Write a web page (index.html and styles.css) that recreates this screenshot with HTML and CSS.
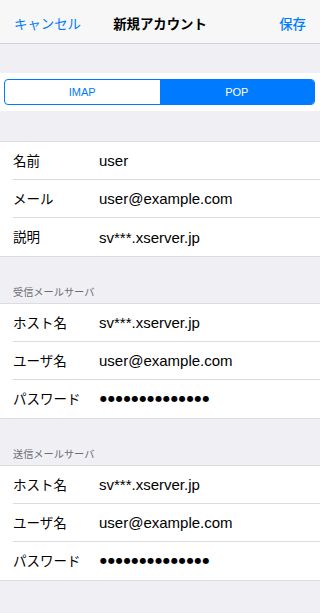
FILE: index.html
```html
<!DOCTYPE html>
<html lang="ja">
<head>
<meta charset="utf-8">
<link rel="stylesheet" href="styles.css">
</head>
<body>
<div class="screen">
  <header class="nav">
    <span class="nav-btn">キャンセル</span>
    <span class="nav-title">新規アカウント</span>
    <span class="nav-btn nav-save">保存</span>
  </header>
  <div class="spacer-top"></div>
  <div class="seg-band">
    <div class="seg">
      <div class="seg-item">IMAP</div>
      <div class="seg-item active">POP</div>
    </div>
  </div>
  <div class="spacer-mid"></div>
  <div class="group">
    <div class="row"><span class="label">名前</span><span class="value">user</span></div>
    <div class="row"><span class="label">メール</span><span class="value">user@example.com</span></div>
    <div class="row"><span class="label">説明</span><span class="value">sv***.xserver.jp</span></div>
  </div>
  <div class="section-header">受信メールサーバ</div>
  <div class="group">
    <div class="row"><span class="label">ホスト名</span><span class="value">sv***.xserver.jp</span></div>
    <div class="row"><span class="label">ユーザ名</span><span class="value">user@example.com</span></div>
    <div class="row"><span class="label">パスワード</span><span class="value dots">●●●●●●●●●●●●●●</span></div>
  </div>
  <div class="section-header">送信メールサーバ</div>
  <div class="group">
    <div class="row"><span class="label">ホスト名</span><span class="value">sv***.xserver.jp</span></div>
    <div class="row"><span class="label">ユーザ名</span><span class="value">user@example.com</span></div>
    <div class="row"><span class="label">パスワード</span><span class="value dots">●●●●●●●●●●●●●●</span></div>
  </div>
</div>
</body>
</html>
```
FILE: styles.css
```css
* { box-sizing: border-box; }
html, body { margin: 0; padding: 0; }
body {
  background: #efeff4;
  font-family: "Liberation Sans", "Noto Sans CJK JP", sans-serif;
  color: #000;
}
.screen {
  width: 320px;
  height: 613px;
  background: #efeff4;
  overflow: hidden;
}
.nav {
  height: 44px;
  background: #f7f7f7;
  border-bottom: 1px solid #d2d2d6;
  display: grid;
  grid-template-columns: 1fr auto 1fr;
  align-items: center;
  padding: 5px 14px 0;
  line-height: 1;
}
.nav-btn {
  color: #007aff;
  font-size: 13.4px;
  font-family: "Noto Sans CJK JP", sans-serif;
}
.nav-save { justify-self: end; font-weight: 500; }
.nav-title {
  font-size: 13.4px;
  font-weight: 700;
  font-family: "Noto Sans CJK JP", sans-serif;
}
.spacer-top { height: 29px; }
.seg-band {
  background: #fff;
  height: 38px;
  padding: 6px 5px 0 4px;
}
.seg {
  display: flex;
  height: 26px;
  border: 1px solid #007aff;
  border-radius: 4px;
  overflow: hidden;
}
.seg-item {
  flex: 1;
  display: flex;
  align-items: center;
  justify-content: center;
  font-size: 11px;
  color: #007aff;
  font-family: "Liberation Sans", sans-serif;
}
.seg-item.active {
  background: #007aff;
  color: #fff;
}
.spacer-mid { height: 30px; }
.group {
  background: #fff;
  border-top: 1px solid #dcdce0;
  border-bottom: 1px solid #dcdce0;
}
.row {
  height: 37px;
  display: flex;
  align-items: center;
  margin-left: 13px;
  line-height: 1;
}
.row + .row { border-top: 1px solid #dcdce0; height: 38px; }
.row:last-child { height: 39px; }
.label {
  width: 86px;
  font-family: "Noto Sans CJK JP", sans-serif;
  font-size: 13.5px;
}
.value {
  font-size: 15px;
}
.dots {
  font-family: "DejaVu Sans", sans-serif;
  font-size: 8px;
  letter-spacing: 0.9px;
  margin-left: 1px;
}
.section-header {
  height: 46px;
  display: flex;
  align-items: flex-end;
  padding: 0 0 6px 13px;
  font-size: 10.2px;
  line-height: 1;
  color: #6d6d72;
  font-family: "Noto Sans CJK JP", sans-serif;
}
```
